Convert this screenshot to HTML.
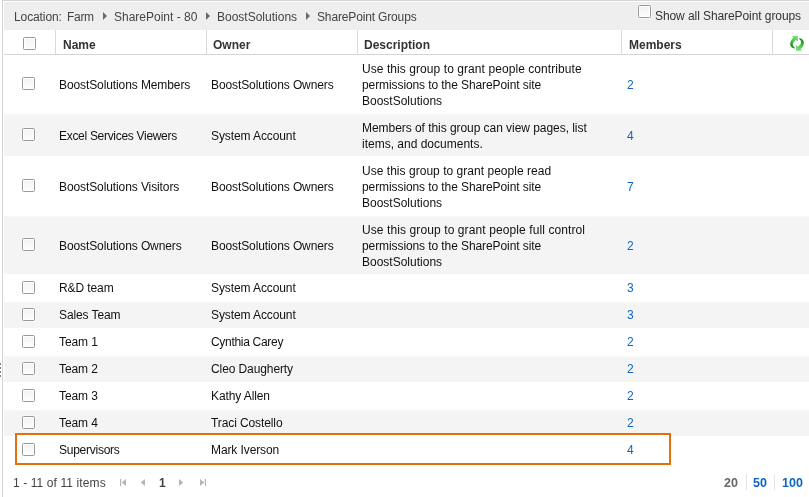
<!DOCTYPE html>
<html><head><meta charset="utf-8">
<style>
*{margin:0;padding:0;box-sizing:border-box}
html,body{width:809px;height:497px;overflow:hidden;background:#fff}
body{position:relative;-webkit-font-smoothing:antialiased;font-family:"Liberation Sans",sans-serif;font-size:12px;color:#111}
.a{position:absolute}
.t{position:absolute;white-space:nowrap;will-change:transform;line-height:16px;height:16px}
.ln{position:absolute;background:#d9d9d9}
.cb{position:absolute;width:13px;height:13px;border:1px solid #989898;border-radius:1.5px;background:linear-gradient(#f3f3f3,#fdfdfd);box-shadow:inset 0 0 0 1px #fff,0 0 0 1px rgba(255,255,255,.4)}
.g{position:absolute;left:4px;width:805px;background:#f4f4f4;box-shadow:inset 1px 1px 0 #f8f8f8}
.hd{font-weight:bold;color:#333}
.n{color:#0b66c3}
.arr{position:absolute;width:0;height:0;border-top:4px solid transparent;border-bottom:4px solid transparent;border-left:4.5px solid #6a6a6a}
</style></head><body>
<!-- outer borders -->
<div class="a" style="left:2px;top:0;width:1px;height:497px;background:#d4d4d4"></div>
<div class="a" style="left:2px;top:0;width:807px;height:1px;background:#d4d4d4"></div>
<div class="a" style="left:0;top:363px;width:1px;height:2px;background:#808080"></div>
<div class="a" style="left:0;top:367px;width:1px;height:2px;background:#808080"></div>
<div class="a" style="left:0;top:371px;width:1px;height:2px;background:#808080"></div>
<div class="a" style="left:0;top:375px;width:1px;height:2px;background:#808080"></div>
<!-- toolbar -->
<div class="a" style="left:4px;top:2px;width:805px;height:28px;background:#eeeeee"></div>
<div class="t" style="left:14px;top:9px;color:#444;letter-spacing:-0.1px">Location:</div>
<div class="t" style="left:66.5px;top:9px;color:#444;letter-spacing:-0.3px">Farm</div>
<div class="arr" style="left:103px;top:12px"></div>
<div class="t" style="left:114px;top:9px;color:#444">SharePoint - 80</div>
<div class="arr" style="left:206px;top:12px"></div>
<div class="t" style="left:217px;top:9px;color:#444">BoostSolutions</div>
<div class="arr" style="left:306px;top:12px"></div>
<div class="t" style="left:317px;top:9px;color:#444;letter-spacing:-0.15px">SharePoint Groups</div>
<div class="cb" style="left:638px;top:5px;background:linear-gradient(#f2f2f2,#fcfcfc)"></div>
<div class="t" style="left:655px;top:8px;color:#333;letter-spacing:-0.08px">Show all SharePoint groups</div>
<!-- header -->
<div class="ln" style="left:4px;top:54px;width:805px;height:1px;background:#d4d4d4"></div>
<div class="ln" style="left:55px;top:30px;width:1px;height:24px"></div>
<div class="ln" style="left:206px;top:30px;width:1px;height:24px"></div>
<div class="ln" style="left:357px;top:30px;width:1px;height:24px"></div>
<div class="ln" style="left:621px;top:30px;width:1px;height:24px"></div>
<div class="ln" style="left:772px;top:30px;width:1px;height:24px"></div>
<div class="cb" style="left:23px;top:37px"></div>
<div class="t hd" style="left:63px;top:37px">Name</div>
<div class="t hd" style="left:213px;top:37px">Owner</div>
<div class="t hd" style="left:364px;top:37px">Description</div>
<div class="t hd" style="left:629px;top:37px">Members</div>
<svg class="a" style="left:786px;top:33px" width="22" height="22" viewBox="0 0 22 22">
  <defs><linearGradient id="gr" gradientUnits="userSpaceOnUse" x1="11" y1="3" x2="4.5" y2="13"><stop offset="0" stop-color="#86e286"/><stop offset="0.55" stop-color="#4cc24c"/><stop offset="1" stop-color="#138a13"/></linearGradient></defs>
  <g id="ar"><path d="M6,3 L12,3 L12,8.6 L10.2,6.9 C8.6,8.0 7.4,9.2 7.0,10.6 C6.7,11.8 7.0,13.5 8.7,14.4 L8.7,15.6 C6.3,15.2 4.4,13.6 4.2,11.5 C4.0,9.0 5.0,6.5 7.5,4.4 Z" fill="url(#gr)"/></g>
  <use href="#ar" transform="rotate(180 11 10.35)"/>
</svg>
<!-- row backgrounds -->
<div class="g" style="top:114px;height:42px"></div>
<div class="g" style="top:216px;height:58px"></div>
<div class="g" style="top:302px;height:26px"></div>
<div class="g" style="top:356px;height:26px"></div>
<div class="g" style="top:410px;height:26px"></div>
<!-- selected row -->
<div class="a" style="left:15px;top:433px;width:656px;height:32px;border:2px solid #e3700d;background:#fff"></div>
<!-- checkboxes -->
<div class="cb" style="left:22px;top:77px"></div>
<div class="cb" style="left:22px;top:128px"></div>
<div class="cb" style="left:22px;top:179px"></div>
<div class="cb" style="left:22px;top:238px"></div>
<div class="cb" style="left:22px;top:281px"></div>
<div class="cb" style="left:22px;top:308px"></div>
<div class="cb" style="left:22px;top:335px"></div>
<div class="cb" style="left:22px;top:362px"></div>
<div class="cb" style="left:22px;top:389px"></div>
<div class="cb" style="left:22px;top:416px"></div>
<div class="cb" style="left:22px;top:443px"></div>
<!-- row 1 -->
<div class="t" style="left:59px;top:77px;letter-spacing:-0.1px">BoostSolutions Members</div>
<div class="t" style="left:211px;top:77px;letter-spacing:-0.1px">BoostSolutions Owners</div>
<div class="t" style="left:362px;top:61px;letter-spacing:0.07px">Use this group to grant people contribute</div>
<div class="t" style="left:362px;top:77px;letter-spacing:-0.09px">permissions to the SharePoint site</div>
<div class="t" style="left:362px;top:93px">BoostSolutions</div>
<div class="t n" style="left:627px;top:77px">2</div>
<!-- row 2 -->
<div class="t" style="left:59px;top:128px;letter-spacing:-0.3px">Excel Services Viewers</div>
<div class="t" style="left:211px;top:128px;letter-spacing:-0.1px">System Account</div>
<div class="t" style="left:362px;top:120px;letter-spacing:-0.05px">Members of this group can view pages, list</div>
<div class="t" style="left:362px;top:136px">items, and documents.</div>
<div class="t n" style="left:627px;top:128px">4</div>
<!-- row 3 -->
<div class="t" style="left:59px;top:179px;letter-spacing:-0.1px">BoostSolutions Visitors</div>
<div class="t" style="left:211px;top:179px;letter-spacing:-0.1px">BoostSolutions Owners</div>
<div class="t" style="left:362px;top:163px;letter-spacing:0.03px">Use this group to grant people read</div>
<div class="t" style="left:362px;top:179px;letter-spacing:-0.09px">permissions to the SharePoint site</div>
<div class="t" style="left:362px;top:195px">BoostSolutions</div>
<div class="t n" style="left:627px;top:179px">7</div>
<!-- row 4 -->
<div class="t" style="left:59px;top:238px;letter-spacing:-0.1px">BoostSolutions Owners</div>
<div class="t" style="left:211px;top:238px;letter-spacing:-0.1px">BoostSolutions Owners</div>
<div class="t" style="left:362px;top:222px;letter-spacing:0.1px">Use this group to grant people full control</div>
<div class="t" style="left:362px;top:238px;letter-spacing:-0.09px">permissions to the SharePoint site</div>
<div class="t" style="left:362px;top:254px">BoostSolutions</div>
<div class="t n" style="left:627px;top:238px">2</div>
<!-- rows 5-11 -->
<div class="t" style="left:59px;top:280px;letter-spacing:-0.1px">R&amp;D team</div>
<div class="t" style="left:211px;top:280px;letter-spacing:-0.1px">System Account</div>
<div class="t n" style="left:627px;top:280px">3</div>
<div class="t" style="left:59px;top:307px;letter-spacing:-0.1px">Sales Team</div>
<div class="t" style="left:211px;top:307px;letter-spacing:-0.1px">System Account</div>
<div class="t n" style="left:627px;top:307px">3</div>
<div class="t" style="left:59px;top:334px;letter-spacing:-0.1px">Team 1</div>
<div class="t" style="left:211px;top:334px;letter-spacing:-0.3px">Cynthia Carey</div>
<div class="t n" style="left:627px;top:334px">2</div>
<div class="t" style="left:59px;top:361px;letter-spacing:-0.1px">Team 2</div>
<div class="t" style="left:211px;top:361px;letter-spacing:-0.1px">Cleo Daugherty</div>
<div class="t n" style="left:627px;top:361px">2</div>
<div class="t" style="left:59px;top:388px;letter-spacing:-0.1px">Team 3</div>
<div class="t" style="left:211px;top:388px;letter-spacing:-0.1px">Kathy Allen</div>
<div class="t n" style="left:627px;top:388px">2</div>
<div class="t" style="left:59px;top:415px;letter-spacing:-0.1px">Team 4</div>
<div class="t" style="left:211px;top:415px;letter-spacing:-0.1px">Traci Costello</div>
<div class="t n" style="left:627px;top:415px">2</div>
<div class="t" style="left:59px;top:442px;letter-spacing:-0.25px">Supervisors</div>
<div class="t" style="left:211px;top:442px;letter-spacing:-0.1px">Mark Iverson</div>
<div class="t n" style="left:627px;top:442px">4</div>
<!-- footer -->
<div class="t" style="left:13px;top:475px;color:#444;letter-spacing:0.1px">1 - 11 of 11 items</div>
<svg class="a" style="left:110px;top:470px" width="100" height="27" viewBox="0 0 100 27" fill="#b4b4b4">
<rect x="10" y="9" width="1.2" height="7"/><polygon points="16,9 16,16 11.8,12.5"/>
<polygon points="35,9 35,16 30.8,12.5"/>
<polygon points="69,9 69,16 73.2,12.5"/>
<polygon points="90,9 90,16 94.2,12.5"/><rect x="94.8" y="9" width="1.2" height="7"/>
</svg>
<div class="t" style="left:159px;top:475px;color:#444;font-weight:bold">1</div>
<div class="t" style="left:724px;top:475px;color:#666;font-weight:bold;font-size:12.5px">20</div>
<div class="a" style="left:746px;top:474px;width:1px;height:16px;background:#e4e4e4"></div>
<div class="t n" style="left:753px;top:475px;font-weight:bold;font-size:12.5px">50</div>
<div class="a" style="left:774px;top:474px;width:1px;height:16px;background:#e4e4e4"></div>
<div class="t n" style="left:782px;top:475px;font-weight:bold;font-size:12.5px">100</div>
</body></html>
